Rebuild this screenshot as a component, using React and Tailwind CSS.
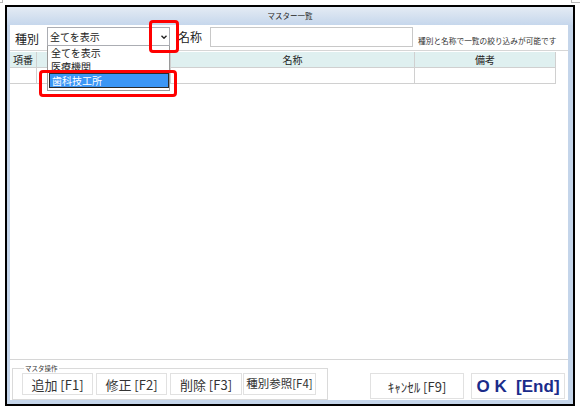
import React from 'react';

// 一覧のカラム定義（幅は罫線込み）
const columns = [
  { key: 'no', label: '項番', width: 'w-[27px]' },
  { key: 'kind', label: '', width: 'w-[134px]' },
  { key: 'name', label: '名称', width: 'w-[244px]' },
  { key: 'note', label: '備考', width: 'w-[141px]' },
];

const kinds = ['全てを表示', '医療機関', '歯科技工所'];

function OpButton({ width, size = 'text-[13px]', children }) {
  return (
    <button
      type="button"
      className={`${width} h-[22px] flex items-center justify-center border border-[#e1e1e1] bg-white leading-none text-[#333] ${size}`}
    >
      {children}
    </button>
  );
}

function Combo() {
  return (
    <div className="relative w-[123px] h-[19px] border border-[#abadb3] bg-white flex items-center">
      <span className="pl-[2px] text-[10px] leading-none text-[#222]">全てを表示</span>
      <div className="ml-auto w-[10px] h-full flex items-center justify-center">
        <svg width="6" height="4" viewBox="0 0 6 4">
          <path d="M0.5 0.8 L3 3.2 L5.5 0.8" fill="none" stroke="#222" strokeWidth="1.4" />
        </svg>
      </div>
    </div>
  );
}

function KindList() {
  // 開いた状態のドロップダウン
  return (
    <div className="absolute left-[37px] top-[21px] w-[123px] h-[45px] border border-[#9a9a9a] border-t-0 bg-white text-[10px] leading-none text-[#222] overflow-hidden">
      <div className="h-[14px] pl-[3px] pt-[2px]">{kinds[0]}</div>
      <div className="h-[13px] pl-[3px] pt-[2px] overflow-hidden">{kinds[1]}</div>
      <div className="ml-[1px] h-[15px] pl-[2px] flex items-center bg-[#3b96f5] text-white border border-[#2a2a2a]">
        {kinds[2]}
      </div>
    </div>
  );
}

export default function App() {
  return (
    <div className="relative w-[580px] h-[411px] bg-white font-['Noto_Sans_CJK_JP',sans-serif] overflow-hidden">
      {/* 余白の角マーク */}
      <div className="absolute left-0 top-0 w-[3px] h-[3px] border-r border-b border-[#b8b8b8]" />
      <div className="absolute left-[571px] top-0 w-[9px] h-[3px] border-l border-b border-[#b8b8b8]" />

      <div className="ml-[5px] mt-[5px] w-[570px] h-[401px] border-2 border-black flex flex-col bg-[#c4d5ea]">
        {/* タイトルバー */}
        <div className="h-[18px] flex items-center justify-center bg-linear-to-b from-[#e4ebf4] to-[#c6d7ec] text-[7.5px] leading-none text-[#222]">
          マスター一覧
        </div>

        <div className="flex-1 flex pl-[3px] pr-[5px] pb-[4px]">
          <div className="relative flex-1 bg-white flex flex-col">
            {/* 絞り込み行 */}
            <div className="h-[26px] border-b border-[#d6d6d6] flex items-start pt-[2px]">
              <div className="ml-[5px] w-[32px] h-[19px] mt-[2px] flex items-center text-[12px] leading-none text-[#222]">種別</div>
              <Combo />
              <div className="ml-[8px] w-[32px] h-[19px] flex items-center text-[12px] leading-none text-[#222]">名称</div>
              <div className="w-[203px] h-[20px] border border-[#c8c8c8] bg-white" />
              <div className="ml-[5px] mt-[10px] text-[7.7px] leading-none text-[#333] whitespace-nowrap">
                種別と名称で一覧の絞り込みが可能です
              </div>
            </div>

            {/* 一覧 */}
            <div className="mt-[1px] w-[546px] text-[10px] leading-none text-[#222]">
              <div className="flex h-[16px] bg-[#dff0f0] border-b border-[#d0d0d0]">
                {columns.map((c) => (
                  <div key={c.key} className={`${c.width} border-r border-[#d0d0d0] flex items-center justify-center`}>
                    {c.label}
                  </div>
                ))}
              </div>
              <div className="flex h-[16px] border-b border-[#d0d0d0]">
                {columns.map((c) => (
                  <div key={c.key} className={`${c.width} border-r border-[#d0d0d0]`} />
                ))}
              </div>
            </div>

            <div className="flex-1" />

            {/* 操作ボタン */}
            <div className="h-[41px] border-t border-[#d6d6d6] flex items-start">
              <fieldset className="ml-[2px] mt-[4px] w-[316px] h-[36px] border border-[#dadada] flex gap-[3px] pl-[9px] pt-[1px]">
                <legend className="ml-[2px] px-[1px] text-[6.5px] leading-[8px] text-[#333]">マスタ操作</legend>
                <OpButton width="w-[71px]">追加 [F1]</OpButton>
                <OpButton width="w-[71px]">修正 [F2]</OpButton>
                <OpButton width="w-[72px]">削除 [F3]</OpButton>
                <div className="-ml-[2px]">
                  <OpButton width="w-[73px]" size="text-[11.5px]">種別参照[F4]</OpButton>
                </div>
              </fieldset>
              <div className="ml-auto mr-[3px] mt-[13px] flex gap-[7px]">
                <button type="button" className="w-[94px] h-[26px] border border-[#e1e1e1] bg-white text-[13px] leading-none text-[#333] flex items-center justify-center">
                  ｷｬﾝｾﾙ [F9]
                </button>
                <button type="button" className="w-[94px] h-[26px] border border-[#e1e1e1] bg-white text-[17px] leading-none font-bold text-[#1a2c8a] flex items-center justify-center font-['Liberation_Sans',sans-serif]">
                  O K&nbsp; [End]
                </button>
              </div>
            </div>

            <KindList />
          </div>
        </div>
      </div>

      {/* 赤枠の強調 */}
      <div className="absolute left-[149px] top-[20px] w-[30px] h-[33px] border-[3px] border-[#ff0000] rounded-[4px]" />
      <div className="absolute left-[39px] top-[70px] w-[138px] h-[27px] border-[3px] border-[#ff0000] rounded-[4px]" />
    </div>
  );
}
